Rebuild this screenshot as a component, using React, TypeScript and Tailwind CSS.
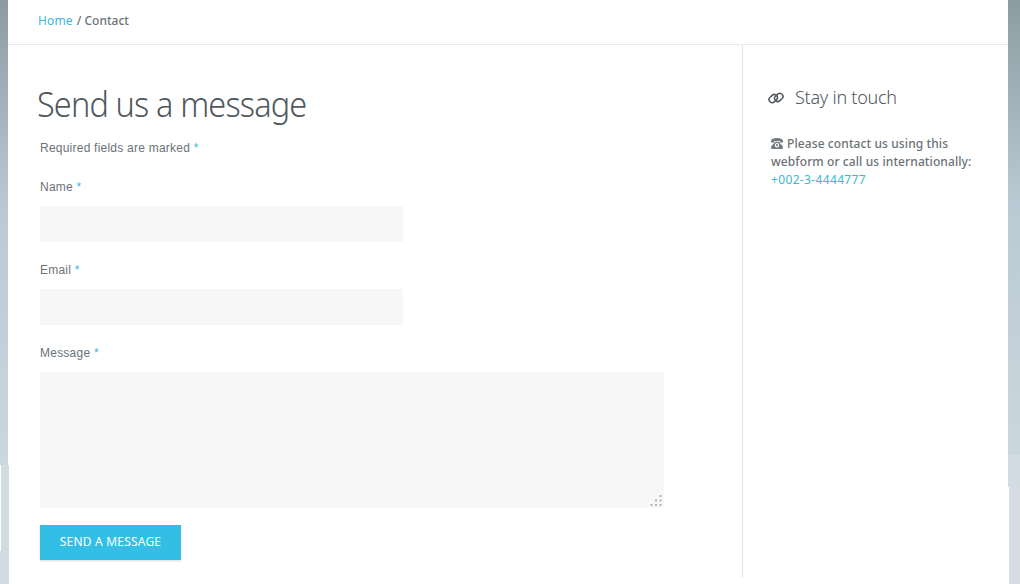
import { FormEvent } from "react";

const Required = () => <span className="text-[#3fb5d8]">*</span>;

function LinkIcon() {
  return (
    <svg className="relative top-px" width="16" height="12" viewBox="0 0 16 12" fill="none" stroke="#50585d" strokeWidth="1.5">
      <rect x="0.7" y="3.5" width="9" height="6.2" rx="3.1" transform="rotate(-42 5.2 6.6)" />
      <rect x="6.3" y="2.3" width="9" height="6.2" rx="3.1" transform="rotate(-42 10.8 5.4)" />
    </svg>
  );
}

function PhoneIcon() {
  return (
    <svg className="mr-1 inline-block align-[-1px]" width="12" height="11" viewBox="0 0 12 11" fill="#737b80">
      <path d="M0 3.4C0 1 2.7 0 6 0s6 1 6 3.4v1.2H8.8V2.9H3.2v1.7H0z" />
      <path fillRule="evenodd" d="M4 3.7h4L9 5.2l2.8 3V11H.2V8.2L3 5.2zM6 5a2.2 2.2 0 1 0 0 4.4A2.2 2.2 0 0 0 6 5z" />
      <circle cx="6" cy="7.2" r="1.1" />
    </svg>
  );
}

function ResizeGrip() {
  return (
    <svg className="pointer-events-none absolute right-[2px] bottom-[1px]" width="12" height="12" fill="#b5b5b5">
      <path d="M9.5 0h2v2h-2zM5 4.5h2v2H5zM9.5 4.5h2v2h-2zM.5 9h2v2h-2zM5 9h2v2H5zM9.5 9h2v2h-2z" />
    </svg>
  );
}

export default function App() {
  const handleSubmit = (e: FormEvent) => {
    e.preventDefault();
  };

  return (
    <div className="flex h-[584px] w-[1020px] overflow-hidden bg-white font-['Noto_Sans',sans-serif] text-[#6b7276]">
      {/* left page edge */}
      <div className="w-[9px] shrink-0">
        <div className="h-[465px] w-2 bg-linear-to-b from-[#8d9ca2] via-[#bac9d3] via-45% to-[#cbd7de]" />
        <div className="h-[86px] w-[9px] border-l border-white bg-[#d1dbe2]" />
        <div className="h-[33px] w-[9px] bg-[#d2dce2]" />
      </div>

      <div className="flex w-[999px] flex-col">
        <nav className="-ml-px flex h-[45px] items-start border-b border-[#e9e9e9] pt-[12px] pl-[30px] text-[12px] leading-[18px]">
          <a href="#" className="tracking-[0.15px] text-[#3fb5d8]">Home</a>
          <span className="ml-1 font-medium">/ Contact</span>
        </nav>

        <div className="flex h-[539px]">
          <main className="h-[533px] w-[734px] border-r border-[#e2e2e2] pl-[31px]">
            <h1 className="-ml-[3px] origin-left scale-x-[0.955] pt-[36px] text-[34px] leading-[46px] font-[350] tracking-[-0.9px] whitespace-nowrap text-[#50585d]">
              Send us a message
            </h1>
            <form onSubmit={handleSubmit} className="font-['Liberation_Sans',sans-serif] text-[12px] leading-[18px] tracking-[0.23px]">
              <p className="mt-[12px]">Required fields are marked <Required /></p>
              <label className="mt-[21px] block">Name <Required />
                <input type="text" className="mt-[10px] block h-9 w-[363px] bg-[#f7f7f7] px-3 outline-none" />
              </label>
              <label className="mt-[19px] block">Email <Required />
                <input type="email" className="mt-[10px] block h-9 w-[363px] bg-[#f7f7f7] px-3 outline-none" />
              </label>
              <label className="mt-[19px] block">Message <Required />
                <span className="relative mt-[10px] block h-[136px] w-[624px]">
                  <textarea className="block h-full w-full resize-none bg-[#f7f7f7] p-3 outline-none" />
                  <ResizeGrip />
                </span>
              </label>
              <button
                type="submit"
                className="mt-[17px] block h-[35px] w-[141px] bg-[#33bee5] pb-[2px] font-['Noto_Sans',sans-serif] text-[12px] tracking-[0.2px] text-white shadow-[0_1px_2px_rgba(0,0,0,0.15)]"
              >
                SEND A MESSAGE
              </button>
            </form>
          </main>

          <aside className="flex-1 pl-[25px]">
            <h2 className="flex items-center gap-[11px] pt-[40px] text-[18px] leading-6 font-light tracking-[-0.25px] text-[#50585d]">
              <LinkIcon />
              Stay in touch
            </h2>
            <p className="mt-[26px] ml-[3px] text-[12px] leading-[18px] font-medium tracking-[0.1px] whitespace-nowrap">
              <PhoneIcon />
              Please contact us using this<br />
              webform or call us internationally:<br />
              <a href="#" className="font-normal tracking-[0.35px] text-[#3fb5d0]">+002-3-4444777</a>
            </p>
          </aside>
        </div>
      </div>

      {/* right page edge */}
      <div className="w-3 shrink-0">
        <div className="h-[455px] bg-linear-to-b from-[#8d9ca2] via-[#bac9d3] via-45% to-[#cbd7de]" />
        <div className="h-8 bg-[#d3dce2]" />
        <div className="ml-px h-[97px] bg-[#d5dce4]" />
      </div>
    </div>
  );
}
